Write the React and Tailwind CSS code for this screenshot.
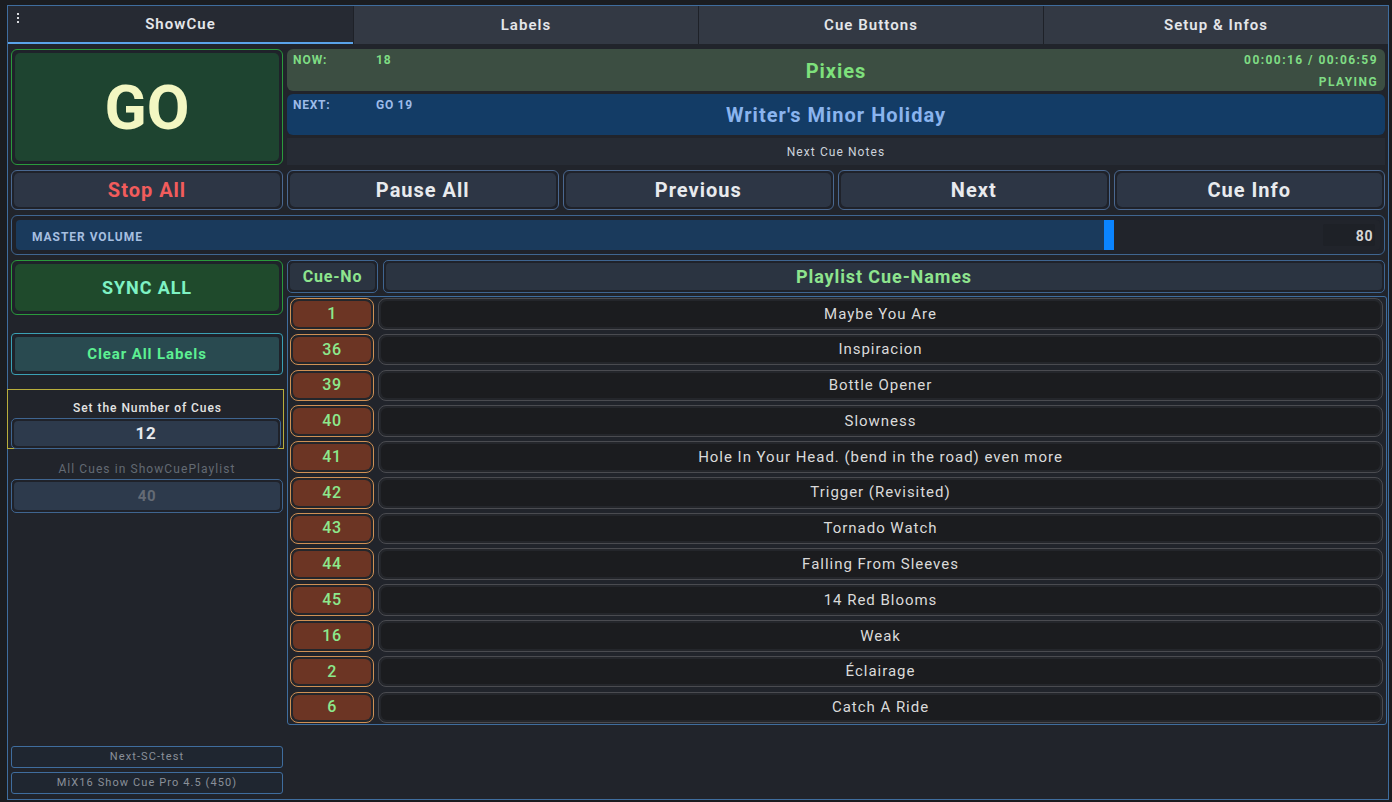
import React from "react";

const cues = [
  ["1", "Maybe You Are"],
  ["36", "Inspiracion"],
  ["39", "Bottle Opener"],
  ["40", "Slowness"],
  ["41", "Hole In Your Head. (bend in the road) even more"],
  ["42", "Trigger (Revisited)"],
  ["43", "Tornado Watch"],
  ["44", "Falling From Sleeves"],
  ["45", "14 Red Blooms"],
  ["16", "Weak"],
  ["2", "Éclairage"],
  ["6", "Catch A Ride"],
];

function Btn({ children, className = "", text = "text-[#e8eaee]" }) {
  return (
    <div className={"rounded-[6px] border border-[#4a6890] bg-[#1f222a] p-[2px] " + className}>
      <div className={"flex h-full w-full items-center justify-center rounded-[5px] bg-[#2d3645] font-bold text-[20px] tracking-[0.05em] " + text}>
        {children}
      </div>
    </div>
  );
}

export default function App() {
  return (
    <div
      className="h-[802px] w-[1392px] overflow-hidden bg-[#1b1d21] pt-[5px] pl-[7px]"
      style={{ fontFamily: "Roboto, 'Noto Sans', 'Liberation Sans', sans-serif" }}
    >
      <div className="flex h-[795px] w-[1382px] flex-col border border-[#3f6d9e] bg-[#21242b]">
        {/* Tabs */}
        <div className="grid h-[38px] grid-cols-4 bg-[#333944]">
          <div className="relative flex items-center justify-center border-b-2 border-[#5aa3ea] bg-[#262a33] pt-[1px] text-[15px] font-semibold tracking-[0.07em] text-[#e4e6ea]">
            <div className="absolute left-[9px] top-[7px] flex flex-col gap-[2px]">
              <span className="h-[2px] w-[2px] bg-[#d8dade]" />
              <span className="h-[2px] w-[2px] bg-[#d8dade]" />
              <span className="h-[2px] w-[2px] bg-[#d8dade]" />
            </div>
            ShowCue
          </div>
          <div className="flex items-center justify-center border-l border-[#1e2128] text-[15px] font-semibold tracking-[0.07em] text-[#e4e6ea]">Labels</div>
          <div className="flex items-center justify-center border-l border-[#1e2128] text-[15px] font-semibold tracking-[0.07em] text-[#e4e6ea]">Cue Buttons</div>
          <div className="flex items-center justify-center border-l border-[#1e2128] text-[15px] font-semibold tracking-[0.07em] text-[#e4e6ea]">Setup &amp; Infos</div>
        </div>

        <div className="flex flex-1 flex-col px-[3px] pt-[5px] pb-[5px]">
          {/* Top row */}
          <div className="flex h-[116px] gap-[4px]">
            <div className="w-[272px] rounded-[6px] border border-[#2a9a3c] bg-[#1f222a] p-[3px]">
              <div className="flex h-full items-center justify-center rounded-[5px] bg-[#1e4430] text-[62px] font-bold text-[#f3f7c2]">
                GO
              </div>
            </div>
            <div className="flex flex-1 flex-col gap-[3px]">
              <div className="grid h-[42px] grid-cols-[210px_1fr_210px] rounded-[6px] bg-[#3c4e42] px-[6px] text-[#7fdc84]">
                <div className="flex pt-[2px] text-[12px] font-bold tracking-[0.08em]">
                  <span className="w-[83px]">NOW:</span>
                  <span>18</span>
                </div>
                <div className="flex items-center justify-center pt-[2px] text-[20px] font-bold tracking-[0.05em] text-[#7ee07c]">Pixies</div>
                <div className="flex flex-col items-end justify-between pt-[2px] pb-[0px] pr-[1px] text-[12px] font-bold tracking-[0.12em]">
                  <span>00:00:16 / 00:06:59</span>
                  <span>PLAYING</span>
                </div>
              </div>
              <div className="grid h-[41px] grid-cols-[210px_1fr_210px] rounded-[6px] bg-[#133c66] px-[6px] text-[#9dbbe9]">
                <div className="flex pt-[2px] text-[12px] font-bold tracking-[0.06em]">
                  <span className="w-[83px]">NEXT:</span>
                  <span>GO 19</span>
                </div>
                <div className="flex items-center justify-center text-[20px] font-bold tracking-[0.05em] text-[#8ab4ee]">Writer's Minor Holiday</div>
                <div />
              </div>
              <div className="flex flex-1 items-center justify-center bg-[#262b34] pt-[1px] text-[12px] tracking-[0.09em] text-[#cdd3dc]">
                Next Cue Notes
              </div>
            </div>
          </div>

          {/* Buttons */}
          <div className="mt-[5px] flex h-[40px] gap-[4px]">
            <Btn className="w-[272px]" text="text-[#f25c5c]">Stop All</Btn>
            <Btn className="flex-1">Pause All</Btn>
            <Btn className="flex-1">Previous</Btn>
            <Btn className="flex-1">Next</Btn>
            <Btn className="flex-1">Cue Info</Btn>
          </div>

          {/* Volume */}
          <div className="mt-[5px] h-[40px] rounded-[6px] border border-[#3f6590] bg-[#1f222a] p-[4px]">
            <div className="flex h-full rounded-[4px] bg-[#21242b]">
              <div className="flex w-[1088px] items-center rounded-l-[4px] bg-[#1a3a5c] pl-[16px] pt-[3px] text-[12px] font-bold tracking-[0.08em] text-[#a6bfe0]">
                MASTER VOLUME
              </div>
              <div className="w-[10px] bg-[#0a84ff]" />
              <div className="flex flex-1 items-center justify-end pr-[5px]">
                <div className="flex h-[22px] w-[52px] items-center justify-end rounded-[2px] bg-[#1e2127] pr-[2px] pt-[2px] text-[14px] font-bold tracking-[0.04em] text-[#d6d6d6]">
                  80
                </div>
              </div>
            </div>
          </div>

          {/* Bottom */}
          <div className="mt-[5px] flex flex-1 gap-[4px]">
            <div className="flex w-[272px] flex-col">
              <div className="h-[55px] rounded-[6px] border border-[#2a9a3c] bg-[#1f222a] p-[3px]">
                <div className="flex h-full items-center justify-center rounded-[5px] bg-[#1f4a2c] text-[18px] font-bold tracking-[0.05em] text-[#7ef2c4]">
                  SYNC ALL
                </div>
              </div>
              <div className="mt-[18px] h-[42px] rounded-[4px] border border-[#3aa0b4] bg-[#1f222a] p-[3px]">
                <div className="flex h-full items-center justify-center rounded-[3px] bg-[#294a50] text-[15px] font-bold tracking-[0.06em] text-[#5cf092]">
                  Clear All Labels
                </div>
              </div>
              <div className="mt-[14px] -ml-[4px] flex h-[60px] w-[277px] flex-col items-end border border-[#b8ae3c] pt-[9px]">
                <div className="w-full pl-[4px] text-center text-[12px] font-medium tracking-[0.08em] text-[#e4e4e4]">Set the Number of Cues</div>
                <div className="mt-[1px] mr-[2px] h-[31px] w-[270px] rounded-[5px] border border-[#3f6590] bg-[#1f222a] p-[2px]">
                  <div className="flex h-full items-center justify-center rounded-[4px] bg-[#2d3a4c] text-[17px] font-bold tracking-[0.05em] text-[#e6e9ee]">12</div>
                </div>
              </div>
              <div className="mt-[11px] text-center text-[12px] tracking-[0.09em] text-[#636a73]">All Cues in ShowCuePlaylist</div>
              <div className="mt-[1px] h-[34px] rounded-[5px] border border-[#3f6590] bg-[#1f222a] p-[2px]">
                <div className="flex h-full items-center justify-center rounded-[4px] bg-[#2d3a4c] text-[15px] font-bold tracking-[0.05em] text-[#646b75]">40</div>
              </div>
              <div className="flex-1" />
              <div className="flex h-[22px] items-center justify-center rounded-[3px] border border-[#3f6d9e] bg-[#1f2630] text-[11px] tracking-[0.1em] text-[#8a9099]">
                Next-SC-test
              </div>
              <div className="mt-[4px] flex h-[22px] items-center justify-center rounded-[3px] border border-[#3f6d9e] bg-[#1f2630] text-[11px] tracking-[0.1em] text-[#8a9099]">
                MiX16 Show Cue Pro 4.5 (450)
              </div>
            </div>

            <div className="flex flex-1 flex-col">
              <div className="flex h-[33px] gap-[5px]">
                <div className="w-[91px] rounded-[5px] border border-[#3f6590] bg-[#1f222a] p-[2px]">
                  <div className="flex h-full items-center justify-center rounded-[4px] bg-[#2b3441] text-[16px] font-bold tracking-[0.05em] text-[#8ee48e]">Cue-No</div>
                </div>
                <div className="flex-1 rounded-[5px] border border-[#3f6590] bg-[#1f222a] p-[2px]">
                  <div className="flex h-full items-center justify-center rounded-[4px] bg-[#2b3441] text-[18px] font-bold tracking-[0.05em] text-[#8ee48e]">Playlist Cue-Names</div>
                </div>
              </div>
              <div className="mt-[3px] -mr-[2px] flex flex-col gap-[4.2px] rounded-[3px] border border-[#3f6d9e] pt-[1px] pb-[1px] pl-[2px] pr-[3px]">
                {cues.map(([n, name]) => (
                  <div key={n + name} className="flex h-[31.6px] gap-[4px]">
                    <div className="w-[84px] rounded-[8px] border border-[#cf9054] bg-[#24262b] p-[2px]">
                      <div className="flex h-full items-center justify-center rounded-[6px] bg-[#6c3524] text-[16px] font-medium tracking-[0.04em] text-[#8ce98c]">{n}</div>
                    </div>
                    <div className="flex-1 rounded-[8px] border border-[#4a4b50] bg-[#24262b] p-[2px]">
                      <div className="flex h-full items-center justify-center rounded-[6px] bg-[#1b1c1f] text-[15px] tracking-[0.065em] text-[#dadada]">{name}</div>
                    </div>
                  </div>
                ))}
              </div>
            </div>
          </div>
        </div>
      </div>
    </div>
  );
}
